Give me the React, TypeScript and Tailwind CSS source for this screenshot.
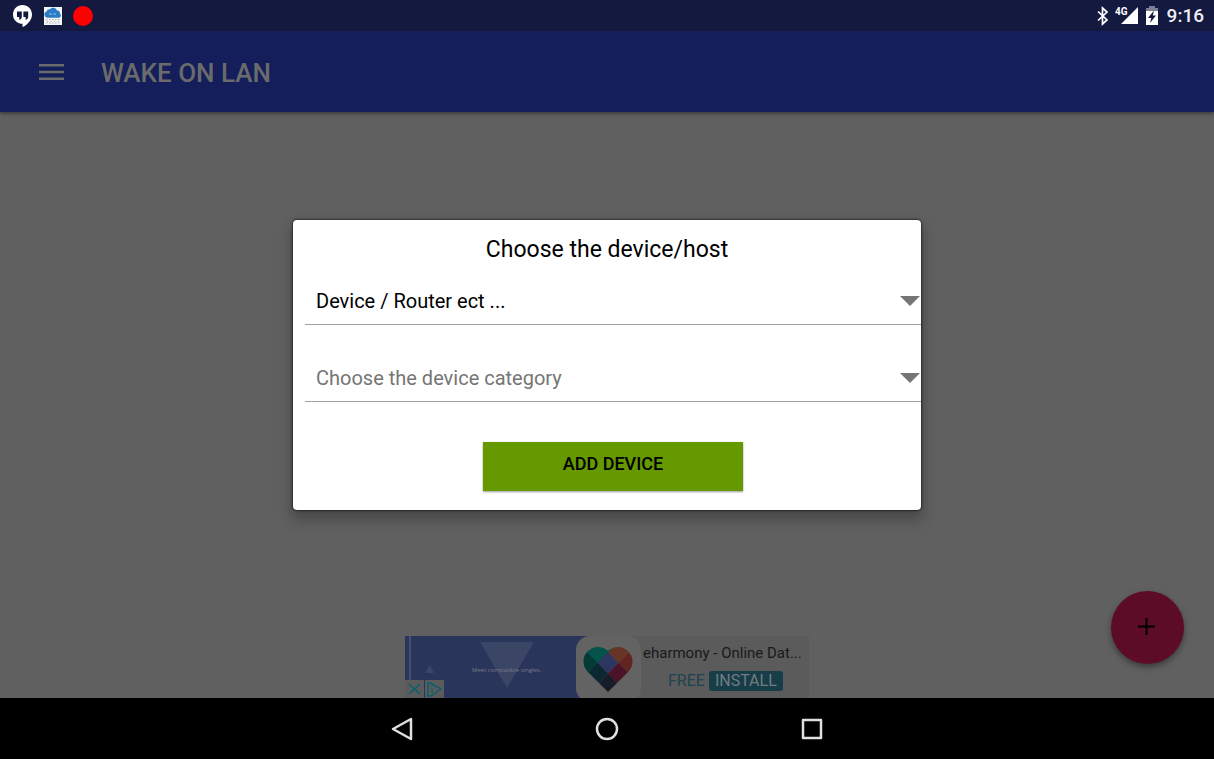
import React, { useState } from "react";

const devices = ["Device / Router ect ...", "Computer", "Server", "Printer"];
const categories = ["Desktop", "Laptop", "Router", "Other"];

const StatusBar: React.FC = () => (
    <div className="flex h-[31px] items-center justify-between bg-[#13193f] pl-3 pr-[10px] text-white">
        <div className="flex items-center gap-[11px]">
            <svg width="21" height="24" viewBox="0 0 21 24" aria-label="Hangouts">
                <path fill="#fff" d="M10.5 1C5.2 1 1 5 1 10.4c0 5.200 4 9.200 9.500 9.400V23c5-2.300 9.500-7 9.500-12.600C20 5 15.800 1 10.500 1z" />
                <path fill="#13193f" d="M5 7.500h4.800v5.200c0 1.600-1 2.600-2.600 3.100v-2.900H5zM11.400 7.500h4.800v5.200c0 1.600-1 2.600-2.600 3.100v-2.900h-2.200z" />
            </svg>
            <svg width="18" height="18" viewBox="0 0 18 18" aria-label="Weather">
                <rect width="18" height="18" fill="#f4f4f4" />
                <path fill="#2b7cc4" d="M3.500 10.700a3.200 3.200 0 0 1-1-6.200A3.200 3.200 0 0 1 6 2.200a4.200 4.200 0 0 1 7 1.200 3.200 3.200 0 0 1 3 3.300 2.400 2.400 0 0 1-.5 4z" />
                <path stroke="#69b4e8" strokeWidth="1.500" d="M5 7h3M9.500 7H12" />
                <path stroke="#a9b9b2" strokeDasharray="1.500 1.500" d="M2 12.500h14M2 16h14" />
                <path stroke="#c7a3a0" strokeDasharray="1 2.500" d="M3 14.300h13" />
            </svg>
            <span className="size-5 rounded-full bg-[#ff0000]" />
        </div>
        <div className="flex items-center">
            <svg width="14" height="20" viewBox="0 0 14 20" fill="none" stroke="#fff" strokeWidth="1.700" aria-label="Bluetooth">
                <path d="M2 5.500l9 8.500-4.500 4V2L11 6l-9 8.500" />
            </svg>
            <svg className="ml-[5px]" width="26" height="20" viewBox="0 0 26 20" fill="#fff" aria-label="4G">
                <path d="M23 1v17H6z" />
                <text x="0" y="9" fontSize="10" fontWeight="700" fontFamily="Roboto, sans-serif">4G</text>
            </svg>
            <svg className="ml-1 mr-2" width="14" height="20" viewBox="0 0 14 20" aria-label="Battery">
                <path fill="#7c7f93" d="M4 0h6v2h3v3H1V2h3z" />
                <path fill="#fff" d="M1 5h12v14H1z" />
                <path fill="#13193f" d="M9 4.500L3 12h3.300L5 17l6-7.500H7.800z" />
            </svg>
            <span className="text-[19px] leading-6 font-medium text-[#eeeef2]">9:16</span>
        </div>
    </div>
);

const AppBar: React.FC = () => (
    <header className="flex h-[81px] items-center gap-[37px] bg-[#141e5b] pl-[39px] text-[#6b6b6b] shadow-[0_2px_3px_rgba(0,0,0,0.35)]">
        <button type="button" aria-label="Open menu">
            <svg width="25" height="18" viewBox="0 0 25 18" fill="currentColor">
                <path d="M0 1h25v2.500H0zM0 7.800h25v2.500H0zM0 14.500h25V17H0z" />
            </svg>
        </button>
        <h1 className="pt-[2px] text-[26px] leading-8 font-medium">WAKE ON LAN</h1>
    </header>
);

const AdBanner: React.FC = () => (
    <a href="#ad" className="flex h-[62px] w-[404px] overflow-hidden bg-[#5b5b5b]">
        <div className="relative w-[236px] shrink-0">
            <svg width="236" height="62" viewBox="0 0 236 62">
                <path fill="#2a355b" d="M0 0h190v62H0z" />
                <path fill="#46506b" d="M4 0h2v62H4z" />
                <path fill="#3b4565" d="M75 6h54l-27 46zM20 37l5-8 4 8z" />
                <text x="67" y="36" fontSize="6" fill="#777c87" fontFamily="Open Sans, sans-serif">Meet compatible singles.</text>
                <rect x="171" width="65" height="66" rx="14" fill="#636363" />
                <defs>
                    <clipPath id="heart">
                        <circle cx="193" cy="25.500" r="14.500" />
                        <circle cx="213" cy="25.500" r="14.500" />
                        <path d="M203 15.500l20.300 20.300L203 56l-20.300-20.200z" />
                    </clipPath>
                </defs>
                <g clipPath="url(#heart)">
                    <path fill="#05534b" d="M192.500 6L213 16.500 192.500 37 172 16.500V6z" />
                    <path fill="#663526" d="M213.500 6L203 16.500 213.500 27 234 6z" />
                    <path fill="#053b35" d="M182 16.500L192.500 27 182 37.500 171.500 27z" />
                    <path fill="#62241f" d="M224 16.500L234.500 27 224 37.500 213.500 27z" />
                    <path fill="#2d3660" d="M203 16.500L213.500 27 203 37.500 192.500 27z" />
                    <path fill="#0b2831" d="M192.500 27L203 37.500 192.500 48 182 37.500z" />
                    <path fill="#4a1327" d="M213.500 27L224 37.500 213.500 48 203 37.500z" />
                    <path fill="#161c29" d="M203 37.500L213.500 48 203 58.500 192.500 48z" />
                </g>
            </svg>
            <svg className="absolute bottom-0 left-0" width="39" height="18" viewBox="0 0 39 18" fill="none" stroke="#086070" strokeWidth="1.500">
                <path fill="#5b5b5b" stroke="none" d="M0 0h19v18H0zM20 0h19v18H20z" />
                <path d="M4 4l11 10M15 4L4 14" />
                <path strokeLinejoin="round" d="M23 3v13h3l10-7-11-6zM27 8.500V13M27 6v1" />
            </svg>
        </div>
        <div className="min-w-0 flex-1 pl-[2px] pt-[6px]">
            <p className="text-[15px] leading-[22px] whitespace-nowrap text-[#191919]">eharmony - Online Dat...</p>
            <p className="flex items-center gap-1 pl-[25px] pt-[7px] text-[16px] leading-5 text-[#1d4450]">
                FREE
                <span className="rounded-[3px] bg-[#163d48] px-[6px] text-[#717c80]">INSTALL</span>
            </p>
        </div>
    </a>
);

interface SpinnerProps {
    id: string;
    label: string;
    options: string[];
    value: string;
    placeholder?: string;
    onChange: (value: string) => void;
}

const Spinner: React.FC<SpinnerProps> = (props) => (
    <div className="relative ml-3 h-[49px] border-b border-[#a0a0a0]">
        <select
            id={props.id}
            aria-label={props.label}
            value={props.value}
            onChange={(e) => props.onChange(e.target.value)}
            className={`h-full w-full appearance-none bg-transparent pt-[2px] pr-6 pl-[11px] text-[20px] leading-8 outline-none ${props.value ? "text-black" : "text-[#757575]"}`}
        >
            {props.placeholder && <option value="">{props.placeholder}</option>}
            {props.options.map((o) => (
                <option key={o} value={o}>{o}</option>
            ))}
        </select>
        <svg className="pointer-events-none absolute top-5 right-px" width="20" height="10" viewBox="0 0 20 10" fill="#757575">
            <path d="M0 0h20L10 10z" />
        </svg>
    </div>
);

const DeviceDialog: React.FC = () => {
    const [device, setDevice] = useState(devices[0]);
    const [category, setCategory] = useState("");

    return (
        <form
            role="dialog"
            aria-labelledby="dialog-title"
            onSubmit={(e) => e.preventDefault()}
            className="flex w-full max-w-[628px] flex-col rounded-[4px] bg-white pt-[14px] pb-[19px] text-black shadow-[0_0_2px_1px_rgba(0,0,0,0.5),0_8px_14px_2px_rgba(0,0,0,0.25)]"
        >
            <h2 id="dialog-title" className="text-center text-[23px] leading-8">Choose the device/host</h2>
            <div className="mt-[10px] flex flex-col gap-7">
                <Spinner id="device" label="Device" options={devices} value={device} onChange={setDevice} />
                <Spinner
                    id="category"
                    label="Category"
                    options={categories}
                    value={category}
                    placeholder="Choose the device category"
                    onChange={setCategory}
                />
            </div>
            <button type="submit" className="mt-10 ml-3 h-[49px] w-[260px] self-center bg-[#669900] pb-[5px] text-[18px] leading-6 font-medium shadow-[0_1px_2px_rgba(0,0,0,0.4)]">
                ADD DEVICE
            </button>
        </form>
    );
};

const NavBar: React.FC = () => (
    <nav className="flex h-[61px] items-center justify-center gap-[181px] bg-black">
        <button type="button" aria-label="Back">
            <svg width="24" height="24" viewBox="0 0 24 24" fill="none" stroke="#e0e0e0" strokeWidth="2.500" strokeLinejoin="round">
                <path d="M21 2v20L3 12z" />
            </svg>
        </button>
        <button type="button" aria-label="Home">
            <svg width="24" height="24" viewBox="0 0 24 24" fill="none" stroke="#e0e0e0" strokeWidth="2.500">
                <circle cx="12" cy="12" r="10" />
            </svg>
        </button>
        <button type="button" aria-label="Recent apps">
            <svg width="24" height="24" viewBox="0 0 24 24" fill="none" stroke="#e0e0e0" strokeWidth="2.500" strokeLinejoin="round">
                <path d="M3 3h18v18H3z" />
            </svg>
        </button>
    </nav>
);

export default function App() {
    return (
        <div className="flex min-h-screen flex-col bg-[#606060] font-[Roboto,sans-serif]">
            <StatusBar />
            <div className="relative flex flex-1 flex-col">
                <AppBar />
                <main className="flex flex-1 items-end justify-center">
                    <AdBanner />
                </main>
                <button
                    type="button"
                    aria-label="Add"
                    className="absolute right-[30px] bottom-[34px] flex size-[73px] items-center justify-center rounded-full bg-[#5c0c27] shadow-[0_3px_6px_rgba(0,0,0,0.4)]"
                >
                    <svg width="19" height="19" viewBox="0 0 19 19" stroke="#000" strokeWidth="2">
                        <path d="M8.500 0v17M0 8.500h17" />
                    </svg>
                </button>
                <div className="absolute inset-0 flex items-center justify-center">
                    <DeviceDialog />
                </div>
            </div>
            <NavBar />
        </div>
    );
}
